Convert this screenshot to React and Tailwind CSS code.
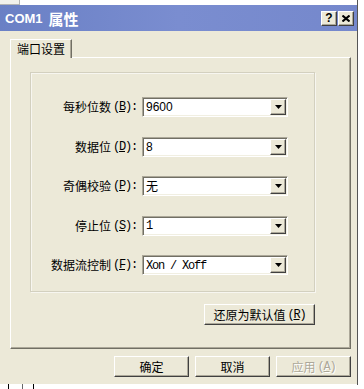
import React from "react";

const raised =
  "border border-t-white border-l-white border-r-[#404040] border-b-[#404040] shadow-[inset_-1px_-1px_0_#aca899]";

function Arrow() {
  return (
    <svg width="7" height="4" viewBox="0 0 7 4" className="block">
      <path d="M0 0H7L3.5 4Z" fill="#000" />
    </svg>
  );
}

function Combo({ children }) {
  return (
    <div className="w-[146px] h-[20px] bg-white border border-t-[#aca899] border-l-[#aca899] border-b-white border-r-white shadow-[inset_1px_1px_0_#716f64,inset_-1px_-1px_0_#f1efe2] flex items-center p-[1px]">
      <div className="flex-1 pl-[2px] text-[12px] leading-[16px] text-black overflow-hidden whitespace-nowrap">
        {children}
      </div>
      <div className={"w-[16px] h-[16px] bg-[#ece9d8] flex items-center justify-center " + raised}>
        <Arrow />
      </div>
    </div>
  );
}

const mono = "font-['Liberation_Mono',monospace] tracking-[-1.2px]";

function Label({ cn, k }) {
  return (
    <div className="w-[106px] flex justify-end items-center text-[12px] leading-[16px] text-black whitespace-nowrap">
      <span className="font-['Noto_Sans_CJK_SC',sans-serif]">{cn}</span>
      <span className={mono + " ml-[2px]"}>
        (<span className="underline">{k}</span>):
      </span>
    </div>
  );
}

function Row({ cn, k, children }) {
  return (
    <div className="flex items-center h-[20px]">
      <Label cn={cn} k={k} />
      <div className="ml-[5px]">
        <Combo>{children}</Combo>
      </div>
    </div>
  );
}

function Btn({ children, w = "w-[75px]", disabled }) {
  return (
    <div
      className={
        w +
        " h-[21px] bg-[#ece9d8] flex items-center justify-center text-[12px] leading-[16px] " +
        raised +
        (disabled ? " text-[#aca899] [text-shadow:1px_1px_0_white]" : " text-black")
      }
    >
      {children}
    </div>
  );
}

export default function App() {
  return (
    <div className="w-[364px] h-[389px] bg-white flex overflow-hidden font-['Liberation_Sans','Noto_Sans_CJK_SC',sans-serif]">
      <div className="w-[357px] flex flex-col">
        <div className="h-[5px] flex">
          <div className="w-[20px] h-[5px] bg-[#f2f1ec] border-r border-b border-[#b4b4b4]" />
        </div>
        {/* title bar */}
        <div className="h-[26px] bg-linear-to-r from-[#6a80c5] via-[#7a8dd0] to-[#7588cc] flex items-center pl-[5px] pr-[3px]">
          <div className="text-white font-bold flex items-center leading-none">
            <span className="text-[13px] font-['Liberation_Sans',sans-serif]">COM1</span>
            <span className="text-[15px] ml-[6px] font-['Noto_Sans_CJK_SC',sans-serif]">属性</span>
          </div>
          <div className="ml-auto flex gap-[1px]">
            <div className={"w-[16px] h-[15px] bg-[#ece9d8] flex items-center justify-center " + raised}>
              <span className="text-[12px] font-bold leading-none text-black">?</span>
            </div>
            <div className={"w-[16px] h-[15px] bg-[#ece9d8] flex items-center justify-center " + raised}>
              <svg width="8" height="7" viewBox="0 0 8 7">
                <path d="M0.5 0.5L7.5 6.5M7.5 0.5L0.5 6.5" stroke="#000" strokeWidth="2" />
              </svg>
            </div>
          </div>
        </div>
        {/* body */}
        <div className="h-[353px] bg-[#ece9d8] pl-[10px] pt-[8px] flex flex-col">
          <div className="relative z-10 -mb-px w-[62px] h-[19px] bg-[#ece9d8] border-t border-l border-white border-r border-r-[#716f64] shadow-[inset_-1px_0_0_#aca899] flex items-center justify-center text-[12px] leading-[16px] text-black font-['Noto_Sans_CJK_SC',sans-serif]">
            端口设置
          </div>
          <div className="w-[341px] h-[292px] border-l border-t border-white border-r border-b border-r-[#716f64] border-b-[#716f64] shadow-[inset_-1px_-1px_0_#aca899] pl-[19px] pt-[14px] flex flex-col">
            <div className="w-[285px] h-[220px] border border-[#d3d0bf] shadow-[inset_1px_1px_0_#f7f6f0,1px_1px_0_#f7f6f0] pt-[24px] flex flex-col gap-[19.5px]">
              <Row cn="每秒位数" k="B">
                <span className="font-['Liberation_Sans',sans-serif]">9600</span>
              </Row>
              <Row cn="数据位" k="D">
                <span className="font-['Liberation_Sans',sans-serif]">8</span>
              </Row>
              <Row cn="奇偶校验" k="P">
                <span className="font-['Noto_Sans_CJK_SC',sans-serif]">无</span>
              </Row>
              <Row cn="停止位" k="S">
                <span className={mono}>1</span>
              </Row>
              <Row cn="数据流控制" k="F">
                <span className={mono + " whitespace-pre"}>Xon / Xoff</span>
              </Row>
            </div>
            <div className="w-[285px] flex justify-end mt-[12px]">
              <Btn w="w-[111px]">
                <span className="font-['Noto_Sans_CJK_SC',sans-serif]">还原为默认值</span>
                <span className={mono + " ml-[2px]"}>
                  (<span className="underline">R</span>)
                </span>
              </Btn>
            </div>
          </div>
          <div className="flex gap-[6px] ml-[104px] mt-[7px]">
            <Btn>
              <span className="font-['Noto_Sans_CJK_SC',sans-serif]">确定</span>
            </Btn>
            <Btn>
              <span className="font-['Noto_Sans_CJK_SC',sans-serif]">取消</span>
            </Btn>
            <Btn disabled>
              <span className="font-['Noto_Sans_CJK_SC',sans-serif]">应用</span>
              <span className={mono + " ml-[2px]"}>
                (<span className="underline">A</span>)
              </span>
            </Btn>
          </div>
        </div>
        <div className="h-[5px] flex">
          <div className="ml-[8px] w-px h-[5px] bg-black" />
          <div className="ml-[13px] w-px h-[5px] bg-[#666]" />
          <div className="ml-[10px] w-px h-[5px] bg-black" />
        </div>
      </div>
      <div className="w-px h-[385px] bg-[#555]" />
      <div className="flex-1" />
    </div>
  );
}
